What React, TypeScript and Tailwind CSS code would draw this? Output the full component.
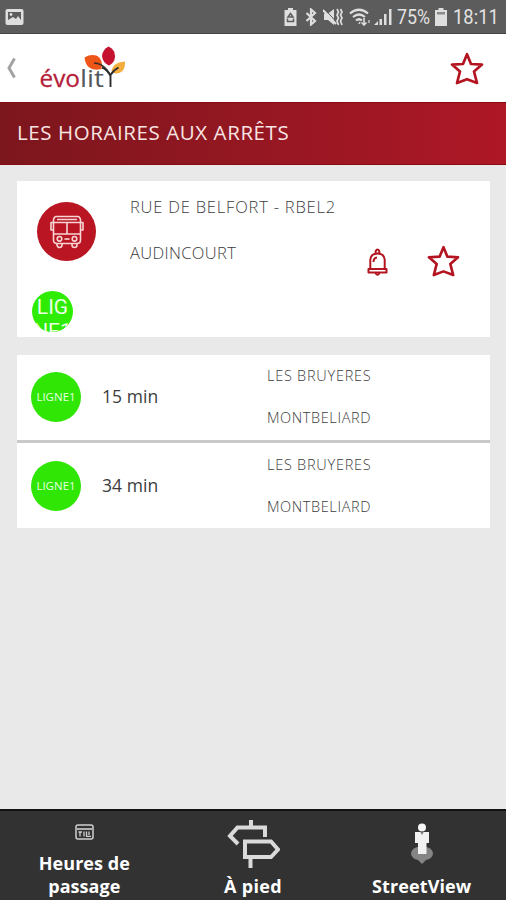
import { ReactNode } from 'react';

interface Departure {
  id: number;
  line: string;
  wait: string;
  stop: string;
  city: string;
}

const DEPARTURES: Departure[] = [
  { id: 1, line: 'LIGNE1', wait: '15 min', stop: 'LES BRUYERES', city: 'MONTBELIARD' },
  { id: 2, line: 'LIGNE1', wait: '34 min', stop: 'LES BRUYERES', city: 'MONTBELIARD' },
];

const App = () => {
  return (
    <div className="flex h-[900px] w-[506px] flex-col overflow-hidden bg-[#e9e9e9] font-['Open_Sans',sans-serif] text-[#3c3c3c]">
      <StatusBar />

      <header className="flex h-[68px] items-start bg-white">
        <svg className="mt-[23px] ml-[5px] h-[22px] w-[12px]" viewBox="0 0 12 22" fill="none">
          <path d="M9.500 1.500 L4 11 L9.500 20.500" stroke="#a3a3a3" strokeWidth="3" />
        </svg>
        <Logo />
        <StarIcon className="mt-[18px] mr-[22px] ml-auto h-[34px] w-[34px]" />
      </header>

      <div className="flex h-[63px] items-center border-y border-[#8a0a12] bg-linear-to-r from-[#7c161d] to-[#ae1726] pb-[2px] pl-[17px]">
        <h1 className="text-[20.5px] leading-none tracking-[0.58px] whitespace-nowrap text-[#f8e4e2]">LES HORAIRES AUX ARRÊTS</h1>
      </div>

      <main className="flex flex-1 flex-col gap-[18px] pt-[16px] pr-[16px] pl-[17px]">
        <section className="flex h-[156px] bg-white">
          <div className="w-[112px] shrink-0">
            <BusBadge />
            <div className="mt-[30px] ml-[15px] h-[41px] w-[41px] overflow-hidden rounded-full bg-[#2fec05] pt-[4px] text-center font-[Roboto,sans-serif] text-[21px] leading-[24px] text-[#eaffe4]">
              LIG
              <br />
              NE1
            </div>
          </div>
          <div className="flex-1 pt-[15px] text-[16.5px] leading-[22px] font-light whitespace-nowrap">
            <p className="ml-px tracking-[0.8px]">RUE DE BELFORT - RBEL2</p>
            <p className="mt-[24px] ml-px tracking-[0.35px]">AUDINCOURT</p>
          </div>
          <div className="flex items-start pt-[64px] pr-[30px]">
            <BellIcon />
            <StarIcon className="ml-[39px] h-[33px] w-[33px]" />
          </div>
        </section>

        <section className="mb-auto flex flex-col gap-[3px] bg-[#c9c9c9]">
          {DEPARTURES.map((departure) => (
            <DepartureRow key={departure.id} departure={departure} />
          ))}
        </section>
      </main>

      <nav className="grid h-[91px] grid-cols-3 border-t-2 border-[#111111] bg-[#323232] text-center text-[18px] leading-[23px] font-bold text-white">
        <NavItem icon={<TimetableIcon />}>
          <span className="tracking-[0.05px]">
            Heures de
            <br />
            passage
          </span>
        </NavItem>
        <NavItem icon={<SignpostIcon />}>
          <span className="tracking-[0.3px]">À pied</span>
        </NavItem>
        <NavItem icon={<PegmanIcon />}>
          <span className="tracking-[0.1px]">StreetView</span>
        </NavItem>
      </nav>
    </div>
  );
};

const DepartureRow = ({ departure }: { departure: Departure }) => (
  <div className="flex h-[85px] items-center bg-white pb-px last:pb-0">
    <div className="ml-[14px] flex h-[50px] w-[50px] items-center justify-center rounded-full bg-[#2fe605] text-[11.5px] font-medium text-[#e6ffe0]">
      {departure.line}
    </div>
    <p className="ml-[21px] w-[165px] pb-px text-[17.5px] tracking-[0.05px]">{departure.wait}</p>
    <div className="text-[14.5px] leading-[20px] font-light whitespace-nowrap">
      <p className="tracking-[0.75px]">{departure.stop}</p>
      <p className="mt-[22px] tracking-[0.6px]">{departure.city}</p>
    </div>
  </div>
);

const NavItem = ({ icon, children }: { icon: ReactNode; children: ReactNode }) => (
  <div className="flex flex-col items-center justify-between pb-[2px]">
    {icon}
    {children}
  </div>
);

const StatusBar = () => (
  <div className="flex h-[34px] items-center border-b border-[#444444] bg-[#5c5c5c] font-[Roboto,sans-serif] text-[20px] text-[#e2e2e2]">
    <svg className="ml-[5px] h-[18px] w-[19px]" viewBox="0 0 19 18">
      <rect x="0.5" y="1" width="18" height="16" rx="2" fill="#dedede" />
      <path d="M3 4h13v8l-3-4-2 3-3-2-5 3z" fill="#5c5c5c" />
      <circle cx="6" cy="6.5" r="1.4" fill="#dedede" />
    </svg>
    <svg className="ml-auto h-[18px] w-[13px]" viewBox="0 0 13 18">
      <path d="M4 0h5v2h3.5v16H0.500V2H4z" fill="#dedede" />
      <path d="M6.500 5.500 9 9H4zM3.500 10.500v3h6v-3" fill="none" stroke="#5c5c5c" strokeWidth="1.5" />
    </svg>
    <svg className="ml-[8px] h-[18px] w-[12px]" viewBox="0 0 12 18" fill="none" stroke="#dedede" strokeWidth="2.2">
      <path d="M1.500 5 10 13 6 16.500V1.500L10 5 1.500 13" />
    </svg>
    <svg className="ml-[6px] h-[18px] w-[20px]" viewBox="0 0 20 18">
      <path d="M1 5.500h4l6-4.500v16l-6-5H1z" fill="#dedede" />
      <path d="M0 2 13 16" stroke="#dedede" strokeWidth="2.200" />
      <path d="M1.500 1 14 14.500" stroke="#5c5c5c" strokeWidth="1" />
      <path d="M14 1l1.500 3-1.500 3 1.500 3-1.500 3 1.500 4M17.500 1l1.500 3-1.500 3 1.500 3-1.500 3 1.500 4" fill="none" stroke="#dedede" strokeWidth="1.700" />
    </svg>
    <svg className="ml-[6px] h-[18px] w-[22px]" viewBox="0 0 22 18" fill="none" stroke="#dedede" strokeWidth="2.2">
      <path d="M1 5.500Q10 -2 19 5.500M4 9Q10 4 16 9M7 12.500Q10 10 13 12.500" />
      <path d="M10 14.500l1 1" />
      <path d="M15 10v7M12.500 14.500 15 17l2.500-2.500" strokeWidth="1.600" />
      <path d="M20 12v3" strokeWidth="1.200" />
    </svg>
    <svg className="ml-[3px] h-[17px] w-[18px]" viewBox="0 0 18 17" fill="#dedede">
      <path d="M0 17l4-4v4zM5.500 11H8v6H5.500zM10 6h2.500v11H10zM15 1h2.500v16H15z" />
    </svg>
    <span className="ml-[5px] w-[34px] origin-left scale-x-[0.89]">75%</span>
    <svg className="ml-[4px] h-[18px] w-[12px]" viewBox="0 0 12 18">
      <path d="M3.500 0h5v2H12v16H0V2h3.500z" fill="#dedede" />
      <path d="M2 4h8v2.500H2z" fill="#8a8a8a" />
    </svg>
    <span className="ml-[6px] w-[53px] origin-left scale-x-[0.92]">18:11</span>
  </div>
);

const Logo = () => (
  <svg className="mt-[6px] ml-[21px] h-[62px] w-[90px]" viewBox="38 40 90 62">
    <text x="39.500" y="87" textLength="40.500" lengthAdjust="spacingAndGlyphs" fontSize="24" fontFamily="Open Sans" fill="#b5213a" stroke="#b5213a" strokeWidth="0.300">
      évo
    </text>
    <text x="80" y="87" textLength="24" lengthAdjust="spacingAndGlyphs" fontSize="24" fontFamily="Open Sans" fill="#54595d">
      lit
    </text>
    <path d="M84.500 57.500Q91 53.500 97.500 56Q103.500 60 101.500 69Q93 71 88.500 67Q85 63.500 84.500 57.500Z" fill="#ee5518" />
    <path d="M108.500 46.500Q115 49.500 115 56.500Q114.500 63 109 65.500Q102.500 62.500 102 56Q102.500 49.500 108.500 46.500Z" fill="#c4122f" />
    <path d="M125 61.500Q125.500 73 116 73.500Q112 73 111.500 70Q113.500 62 125 61.500Z" fill="#f3ae3d" />
    <path d="M94 63Q102 63.500 106.500 69.500L110.500 75" fill="none" stroke="#3a2a26" strokeWidth="1.500" />
    <path d="M110.500 87V75Q113 70.500 118.500 67.500M102 67.500Q107 69 110.500 76" fill="none" stroke="#2b2b2b" strokeWidth="1.900" />
  </svg>
);

const StarIcon = ({ className }: { className: string }) => (
  <svg className={className} viewBox="0 0 34 34" fill="none">
    <path
      d="M17 2.200 21 12 32 12.600 24 19.500 27 31 17 27.200 7 31 10 19.500 2 12.600 13 12Z"
      stroke="#b3141f"
      strokeWidth="2.700"
      strokeLinejoin="round"
    />
  </svg>
);

const BellIcon = () => (
  <svg className="mt-[3px] h-[28px] w-[21px]" viewBox="0 0 21 28" fill="none" stroke="#b3141f" strokeWidth="2" strokeLinejoin="round">
    <path d="M8.700 5V3Q10.500 0 12.300 3V5" />
    <path d="M3.300 20.500V11.500Q4 5.500 10.500 5.500Q17 5.500 17.700 11.500V20.500" />
    <path d="M1.500 21H19.500V24.500H1.500Z" />
    <path d="M6.500 14Q6.500 10 10 9.500" />
    <path d="M8.500 25Q10.500 28.500 12.500 25" />
  </svg>
);

const BusBadge = () => (
  <div className="mt-[21px] ml-[20px] flex h-[59px] w-[59px] items-center justify-center rounded-full bg-[#b91522]">
    <svg className="h-[36px] w-[36px]" viewBox="0 0 36 36" fill="none" stroke="#f7d5d5" strokeWidth="1.600" strokeLinejoin="round">
      <path d="M7 2.500H29Q32 3.500 31.500 8V26Q31.500 29.500 28 29.500H8Q4.500 29.500 4.500 26V8Q4 3.500 7 2.500Z" />
      <path d="M8 5.500H28M5 8.500H31M5 20H31M18 8.500V20" />
      <path d="M4.500 8.500H2V16H4.500M31.500 8.500H34V16H31.500" />
      <circle cx="10.500" cy="24.800" r="2.300" />
      <circle cx="25.500" cy="24.800" r="2.300" />
      <path d="M15.500 25H20.500" />
      <path d="M8 29.500V31Q8.500 33.500 10.500 33.500Q13 33.500 13 31V29.500M23 29.500V31Q23 33.500 25.500 33.500Q28 33.500 28 31V29.500" />
    </svg>
  </div>
);

const TimetableIcon = () => (
  <svg className="mt-[13px] h-[16px] w-[19px]" viewBox="0 0 19 16" fill="none" stroke="#cfcfcf">
    <rect x="1" y="1" width="17" height="14" rx="2" strokeWidth="1.500" />
    <path d="M2 5H17" strokeWidth="1.600" />
    <path d="M3.500 8H7M5 8V12.500M9 7.500V12.500M11.500 7.500V12.500M14 7.500V11M11 12.300H16" strokeWidth="1.300" />
  </svg>
);

const SignpostIcon = () => (
  <svg className="mt-[8px] h-[50px] w-[54px]" viewBox="0 0 54 50" fill="none" stroke="#dadada" strokeWidth="4">
    <path d="M25 1V8M39 18V8.500H11.500L4 17 12 25" />
    <path d="M19 22.500H45L52 30.500 45 38H19ZM24.500 38V49" />
  </svg>
);

const PegmanIcon = () => (
  <svg className="mt-[11px] h-[43px] w-[24px]" viewBox="0 0 24 43">
    <path d="M12 24Q23 25 23 32Q22 37 16 38L12 42 8 38Q2 37 1 32Q1 25 12 24Z" fill="#858585" />
    <circle cx="12" cy="5.500" r="4" fill="#f7f7f7" />
    <path d="M5 10H19V21H16.500V32H8V21H5Z" fill="#f2f2f2" />
    <path d="M10 9.500H14L12 13Z" fill="#777777" />
  </svg>
);

export default App;
